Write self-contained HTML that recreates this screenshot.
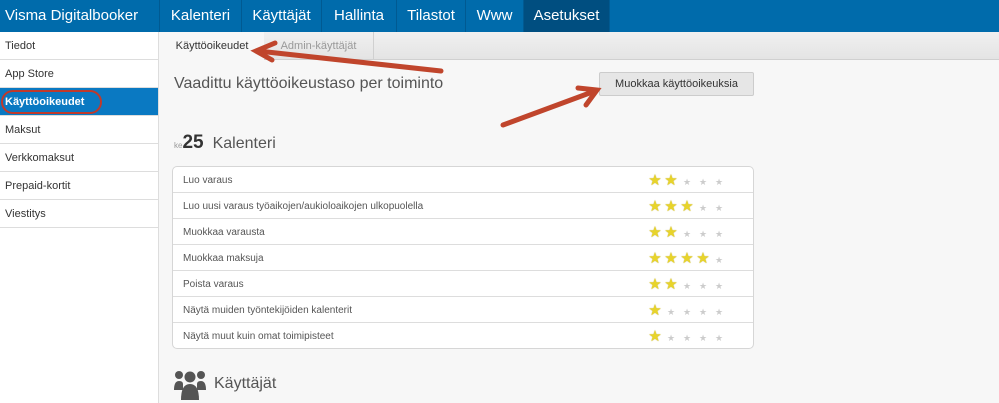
<!DOCTYPE html><html><head><meta charset="utf-8"><style>
*{margin:0;padding:0;box-sizing:border-box}
body{width:999px;height:403px;overflow:hidden;background:#f7f7f7;font-family:"Liberation Sans",sans-serif;position:relative}
.top{position:absolute;left:0;top:0;width:999px;height:32px;background:#006bab}
.top div{position:absolute;top:0;height:32px;line-height:31px;color:#fff;font-size:15px;border-right:1px solid #005a92;text-align:center}
.side{position:absolute;left:0;top:32px;width:159px;height:371px;background:#fff;border-right:1px solid #ddd}
.side div{height:28px;line-height:29px;font-size:11px;color:#333;padding-left:5px;border-bottom:1px solid #ddd}
.side .act{background:#0a79c2;color:#fff;font-weight:bold}
.tabs{position:absolute;left:160px;top:32px;width:839px;height:28px;background:linear-gradient(#f0f0f0,#e4e4e4);border-bottom:1px solid #d0d0d0}
.tab{position:absolute;top:0;height:28px;line-height:28px;font-size:11px;text-align:center}
.tbl{position:absolute;left:172px;top:166px;width:582px;height:183px;background:#fff;border:1px solid #d6d6d6;border-radius:5px}
.row{height:26px;border-bottom:1px solid #ddd;font-size:10px;color:#555;line-height:28px;padding-left:10px;position:relative}
.row:last-child{border-bottom:none}
.st{position:absolute;left:474px;top:1px;line-height:26px}
.st span{display:inline-block;width:16px;text-align:center;font-size:15px;color:#e8d42a;text-shadow:0 0 1px #a89000}
.st span.e{font-size:9px;color:#ccc;text-shadow:none}
.arrow{position:absolute}
</style></head><body>
<div class="top">
<div style="left:0;width:160px;text-align:left;padding-left:5px">Visma Digitalbooker</div>
<div style="left:160px;width:82px">Kalenteri</div>
<div style="left:242px;width:80px">Käyttäjät</div>
<div style="left:322px;width:75px">Hallinta</div>
<div style="left:397px;width:69px">Tilastot</div>
<div style="left:466px;width:58px">Www</div>
<div style="left:524px;width:86px;background:#004e80">Asetukset</div>
</div>
<div class="side">
<div>Tiedot</div><div>App Store</div><div class="act">Käyttöoikeudet</div><div>Maksut</div><div>Verkkomaksut</div><div>Prepaid-kortit</div><div>Viestitys</div>
</div>
<div style="position:absolute;left:1px;top:90px;width:101px;height:24px;border:2px solid #c0392b;border-radius:12px"></div>
<div class="tabs">
<div class="tab" style="left:0;width:104px;background:#f7f7f7;height:29px;color:#333">Käyttöoikeudet</div>
<div class="tab" style="left:104px;width:110px;color:#999;border-right:1px solid #d0d0d0">Admin-käyttäjät</div>
</div>
<div style="position:absolute;left:174px;top:75px;font-size:16px;color:#555">Vaadittu käyttöoikeustaso per toiminto</div>
<div style="position:absolute;left:599px;top:72px;width:155px;height:24px;background:#e6e6e6;border:1px solid #ccc;border-radius:2px;font-size:11px;color:#333;text-align:center;line-height:22px">Muokkaa käyttöoikeuksia</div>
<div style="position:absolute;left:174px;top:132px;color:#333"><span style="font-size:8px;color:#999">ke</span><span style="font-size:19px;font-weight:bold">25</span><span style="font-size:16px;color:#555;margin-left:9px">Kalenteri</span></div>
<div class="tbl">
<div class="row">Luo varaus<div class="st"><span>★</span><span>★</span><span class="e">★</span><span class="e">★</span><span class="e">★</span></div></div>
<div class="row">Luo uusi varaus työaikojen/aukioloaikojen ulkopuolella<div class="st"><span>★</span><span>★</span><span>★</span><span class="e">★</span><span class="e">★</span></div></div>
<div class="row">Muokkaa varausta<div class="st"><span>★</span><span>★</span><span class="e">★</span><span class="e">★</span><span class="e">★</span></div></div>
<div class="row">Muokkaa maksuja<div class="st"><span>★</span><span>★</span><span>★</span><span>★</span><span class="e">★</span></div></div>
<div class="row">Poista varaus<div class="st"><span>★</span><span>★</span><span class="e">★</span><span class="e">★</span><span class="e">★</span></div></div>
<div class="row">Näytä muiden työntekijöiden kalenterit<div class="st"><span>★</span><span class="e">★</span><span class="e">★</span><span class="e">★</span><span class="e">★</span></div></div>
<div class="row">Näytä muut kuin omat toimipisteet<div class="st"><span>★</span><span class="e">★</span><span class="e">★</span><span class="e">★</span><span class="e">★</span></div></div>
</div>
<svg style="position:absolute;left:174px;top:370px" width="32" height="30" viewBox="0 0 32 30" fill="#555">
<circle cx="5" cy="5" r="4"/><circle cx="27" cy="5" r="4"/><circle cx="16" cy="7" r="5.5"/>
<path d="M0 20 Q0 11 5 11 Q9 11 9 14 L9 20Z"/><path d="M32 20 Q32 11 27 11 Q23 11 23 14 L23 20Z"/>
<path d="M7 30 Q7 14 16 14 Q25 14 25 30Z"/></svg>
<div style="position:absolute;left:214px;top:375px;font-size:16px;color:#555">Käyttäjät</div>
<svg class="arrow" style="left:0;top:0" width="999" height="403">
<g stroke="#c0452c" stroke-width="5" fill="none" stroke-linecap="round">
<path d="M441 71 L258 51"/><path d="M275 43 L256 51 L272 60"/>
<path d="M503 125 L595 91"/><path d="M578 88 L597 90 L586 105"/>
</g></svg>
</body></html>
